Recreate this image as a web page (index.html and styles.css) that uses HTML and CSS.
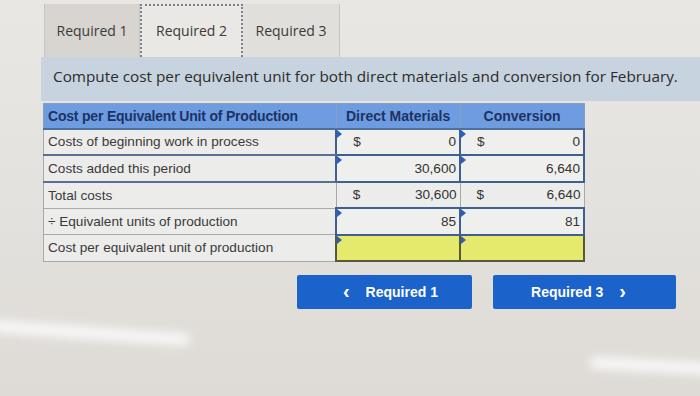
FILE: index.html
```html
<!DOCTYPE html>
<html lang="en">
<head>
  <meta charset="UTF-8">
  <title>Required 2</title>
  <link rel="stylesheet" href="styles.css">
</head>
<body>
  <div class="page">
    <!-- Step tabs -->
    <div class="tabs">
      <div class="tab">Required 1</div>
      <div class="tab current">Required 2</div>
      <div class="tab">Required 3</div>
    </div>

    <div class="prompt">Compute cost per equivalent unit for both direct materials and conversion for February.</div>

    <table class="cost-table">
      <tr class="head">
        <th class="label">Cost per Equivalent Unit of Production</th>
        <th>Direct Materials</th>
        <th>Conversion</th>
      </tr>
      <tr>
        <td class="label entry">Costs of beginning work in process</td>
        <td class="input"><span class="cur">$</span>0</td>
        <td class="input"><span class="cur">$</span>0</td>
      </tr>
      <tr>
        <td class="label entry">Costs added this period</td>
        <td class="input">30,600</td>
        <td class="input">6,640</td>
      </tr>
      <tr>
        <td class="label">Total costs</td>
        <td class="calc"><span class="cur">$</span>30,600</td>
        <td class="calc"><span class="cur">$</span>6,640</td>
      </tr>
      <tr>
        <td class="label">&divide; Equivalent units of production</td>
        <td class="input">85</td>
        <td class="input">81</td>
      </tr>
      <tr>
        <td class="label">Cost per equivalent unit of production</td>
        <td class="input answer"></td>
        <td class="input answer"></td>
      </tr>
    </table>

    <div class="nav">
      <button class="nav-btn prev"><span class="arrow">&lsaquo;</span> Required 1</button>
      <button class="nav-btn next">Required 3 <span class="arrow">&rsaquo;</span></button>
    </div>
  </div>

  <!-- light glare on the screen -->
  <div class="glare glare-left"></div>
  <div class="glare glare-right"></div>
</body>
</html>
```

FILE: styles.css
```css
* {
  margin: 0;
  padding: 0;
  box-sizing: border-box;
}

body {
  width: 700px;
  height: 396px;
  overflow: hidden;
  position: relative;
  background: linear-gradient(#e8e7e4 0, #e6e4e1 120px, #dedbd6 396px);
  font-family: "Liberation Sans", Arial, sans-serif;
}

.page {
  padding-left: 41px;
}

/* Tabs */
.tabs {
  display: flex;
  margin-left: 3px;
  padding-top: 4px;
}

.tab {
  height: 53px;
  padding-top: 17px;
  font-family: "Open Sans", sans-serif;
  font-size: 14px;
  color: #3a3a3a;
  background-color: #d8d5d1;
  border-right: 1px solid #c8c5c1;
  text-align: center;
}

.tab:nth-child(1) { width: 96px; border-left: 1px solid #c8c5c1; }
.tab:nth-child(2) { width: 103px; }
.tab:nth-child(3) { width: 97px; background-color: #e1dfdb; }

.tab.current {
  padding-top: 15px;
  background-color: #e9e8e5;
  border: 2px dotted #7a8290;
  border-bottom: none;
}

/* Instruction band */
.prompt {
  height: 44px;
  padding: 9px 0 0 12px;
  background-color: #c7d3de;
  font-family: "Open Sans", sans-serif;
  font-size: 15.3px;
  color: #2c2c2c;
}

/* Table */
.cost-table {
  margin: 2px 0 0 2px;
  border-collapse: collapse;
  width: 542px;
  font-size: 13.6px;
  color: #333;
}

.cost-table th {
  height: 25px;
  background-color: #6d9ce0;
  color: #1d3264;
  font-size: 14px;
  font-weight: bold;
  text-align: center;
  border: 1px solid #8a9fbf;
  border-bottom: 2px solid #4f6f9c;
}

.cost-table th.label {
  width: 293px;
  text-align: left;
  padding-left: 4px;
  letter-spacing: -0.2px;
}

.cost-table td {
  height: 26.5px;
  border: 1px solid #a9a9a9;
  background-color: #ececea;
}

.cost-table td.label {
  padding-left: 4px;
  color: #3a3a3a;
}

.cost-table td.entry {
  border-bottom: 2px solid #5c6f93;
}

.cost-table td.input,
.cost-table td.calc {
  width: 124px;
  text-align: right;
  padding-right: 3px;
  position: relative;
}

.cost-table td.input {
  border: 2px solid #3f5f8e;
  background-color: #efefed;
}

/* little blue corner marker on editable cells */
.cost-table td.input::before {
  content: "";
  position: absolute;
  left: 0;
  top: 0;
  border-left: 5px solid #2a5fbf;
  border-top: 4px solid transparent;
  border-bottom: 4px solid transparent;
}

.cost-table td.answer {
  background-color: #e6ea6c;
  border-color: #555a3a;
}

.cur {
  float: left;
  padding-left: 16px;
}

/* Navigation buttons */
.nav {
  display: flex;
  gap: 21px;
  margin: 13px 0 0 256px;
}

.nav-btn {
  height: 34px;
  border: none;
  border-radius: 2px;
  background-color: #1b62cb;
  color: #fff;
  font-family: "Liberation Sans", Arial, sans-serif;
  font-size: 14px;
  font-weight: bold;
}

.nav-btn.prev { width: 175px; }
.nav-btn.next { width: 183px; }

.arrow {
  font-size: 20px;
  line-height: 14px;
  padding: 0 12px;
  vertical-align: -1px;
}

/* Glare streaks */
.glare {
  position: absolute;
  height: 12px;
  border-radius: 6px;
  background-color: rgba(255, 255, 255, 0.8);
  filter: blur(5px);
}

.glare-left {
  left: -10px;
  top: 327px;
  width: 200px;
  transform: rotate(4deg);
}

.glare-right {
  left: 590px;
  top: 360px;
  width: 130px;
  transform: rotate(3deg);
}
```
